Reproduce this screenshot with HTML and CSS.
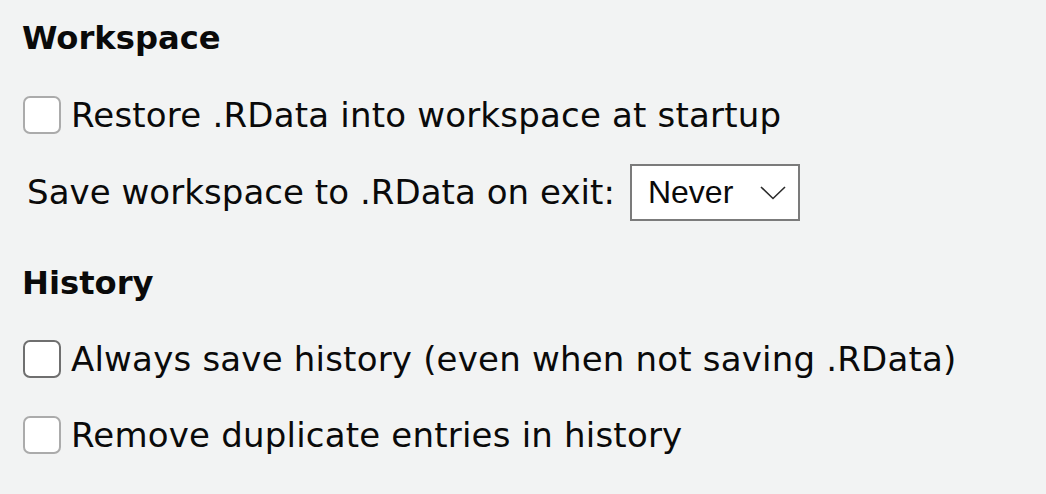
FILE: index.html
```html
<!DOCTYPE html>
<html>
<head>
<meta charset="utf-8">
<link rel="stylesheet" href="styles.css">
</head>
<body>
<div class="panel">
  <div class="heading">Workspace</div>
  <label class="row check-row first">
    <span class="box"></span>
    <span class="label">Restore .RData into workspace at startup</span>
  </label>
  <div class="row select-row">
    <span class="label">Save workspace to .RData on exit:</span>
    <div class="select">
      <span class="select-text">Never</span>
      <svg class="chev" width="26" height="14" viewBox="0 0 26 14"><path d="M1 1 L13 12.5 L25 1" fill="none" stroke="#2b2b2b" stroke-width="1.6"/></svg>
    </div>
  </div>
  <div class="heading second">History</div>
  <label class="row check-row">
    <span class="box dark"></span>
    <span class="label">Always save history (even when not saving .RData)</span>
  </label>
  <label class="row check-row">
    <span class="box"></span>
    <span class="label">Remove duplicate entries in history</span>
  </label>
</div>
</body>
</html>
```

FILE: styles.css
```css
html, body {
  margin: 0;
  padding: 0;
  background: #f2f3f3;
}
body {
  width: 1046px;
  height: 494px;
  overflow: hidden;
  font-family: "DejaVu Sans", "Noto Sans", sans-serif;
  color: #0a0a0a;
}
.panel {
  display: flex;
  flex-direction: column;
  padding-left: 22px;
}
.heading {
  height: 76px;
  display: flex;
  align-items: center;
  font-weight: bold;
  font-size: 32.2px;
}
.heading.second {
  margin-top: 15px;
}
.row {
  height: 76px;
  display: flex;
  align-items: center;
  font-size: 34px;
  letter-spacing: 0.2px;
}
.check-row.first {
  height: 78px;
}
.box {
  width: 34px;
  height: 34px;
  border: 2.5px solid #ababab;
  border-radius: 7px;
  background: #ffffff;
  margin-left: 1px;
  margin-right: 10px;
  flex: none;
}
.box.dark {
  border-color: #6f6f6f;
}
.select-row .label {
  margin-left: 5px;
  margin-right: 15px;
  letter-spacing: 0.05px;
}
.select {
  box-sizing: border-box;
  width: 170px;
  height: 57px;
  border: 2px solid #7b7b7b;
  background: #ffffff;
  display: flex;
  align-items: center;
  padding-left: 16px;
  padding-right: 12px;
  letter-spacing: 0;
}
.select-text {
  font-family: "Liberation Sans", Arial, sans-serif;
  font-size: 32px;
  flex: 1;
}
.chev {
  display: block;
  margin-top: 2px;
}
```
